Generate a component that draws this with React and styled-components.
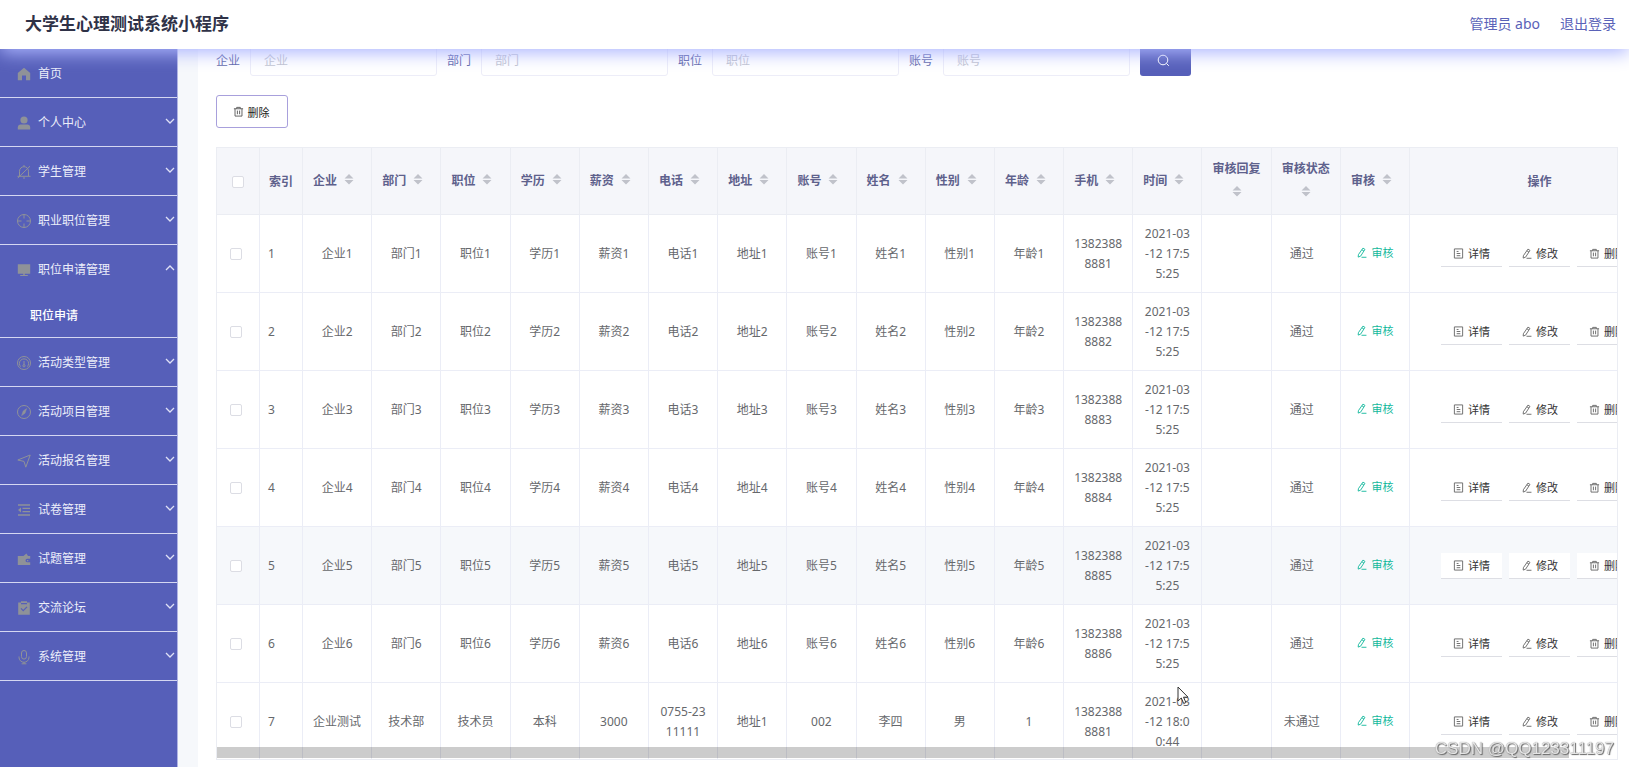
import React from "react";
import styled, { createGlobalStyle } from "styled-components";

const GlobalStyle = createGlobalStyle`
  *, *::before, *::after { box-sizing: border-box; }
  body {
    margin: 0;
    background: #fff;
    font-family: "Noto Sans", "Noto Sans CJK SC", sans-serif;
    font-size: 12px;
    color: #66686c;
  }
  button, input { font-family: inherit; }
  a { text-decoration: none; color: inherit; }
`;

const Page = styled.div`
  height: 100vh;
  display: flex;
  flex-direction: column;
  overflow: hidden;
`;

const Header = styled.header`
  position: relative;
  z-index: 2;
  flex: 0 0 49px;
  display: flex;
  align-items: center;
  justify-content: space-between;
  padding: 0 13px 2px 25px;
  background: #fff;
  box-shadow: 0 4px 18px #adb6ff;
`;

const Title = styled.h1`
  margin: 0;
  font-size: 17px;
  line-height: 24px;
  font-weight: 700;
  color: #2f3247;
`;

const Account = styled.div`
  display: flex;
  gap: 20px;
  font-size: 14px;
  line-height: 20px;
  color: #5a62b8;
`;

const Body = styled.div`
  flex: 1;
  min-height: 0;
  display: flex;
`;

const Sidebar = styled.nav`
  flex: 0 0 178px;
  background: #565fb9;
  border-right: 1px solid #b0b4e4;
`;

const MenuGroup = styled.div`
  border-bottom: 1px solid #d5d7f2;
`;

const MenuItem = styled.a`
  display: flex;
  align-items: center;
  height: 48px;
  padding: 2px 2px 0 16px;
  color: #eceefa;
  line-height: 18px;
`;

const MenuIcon = styled.svg`
  width: 16px;
  height: 16px;
  margin-right: 6px;
  color: #8f9298;
  fill: none;
  stroke: currentColor;
  stroke-width: 1;
`;

const MenuArrow = styled.svg`
  width: 10px;
  height: 10px;
  margin: 0 0 5px auto;
  fill: none;
  stroke: #dfe1f6;
  stroke-width: 1.3;
  transform: ${(p) => (p.$open ? "rotate(180deg)" : "none")};
`;

const SubItem = styled.a`
  display: flex;
  align-items: center;
  height: 44px;
  padding-left: 30px;
  color: #fff;
  font-weight: 500;
`;

const Main = styled.main`
  flex: 1;
  min-width: 0;
  padding-left: 20px;
  background: #f6f8fb;
  overflow: hidden;
`;

const Panel = styled.section`
  display: flow-root;
  height: 100%;
  padding: 0 11px 0 18px;
  background: #fff;
`;

const SearchForm = styled.form`
  display: flex;
  align-items: center;
  gap: 10px;
  margin-top: -5px;
`;

const Field = styled.label`
  display: flex;
  align-items: center;
  gap: 10px;
  color: #6066a8;
`;

const TextInput = styled.input`
  width: 187px;
  height: 32px;
  padding: 0 13px;
  border: 1px solid #ededf8;
  border-radius: 3px;
  background: #fff;
  font-size: 12px;
  color: #606266;
  &::placeholder { color: #c3c5cf; }
`;

const SearchButton = styled.button`
  display: flex;
  align-items: center;
  justify-content: center;
  width: 51px;
  height: 32px;
  padding: 0 5px 0 0;
  border: 0;
  border-radius: 3px;
  background: #565fb9;
  color: #fff;
`;

const Icon = styled.svg`
  flex: none;
  width: ${(p) => p.$size || 11}px;
  height: ${(p) => p.$size || 11}px;
  fill: none;
  stroke: currentColor;
  stroke-width: 1;
  opacity: ${(p) => (p.$soft ? 0.75 : 1)};
`;

const DeleteButton = styled.button`
  display: flex;
  align-items: center;
  justify-content: center;
  gap: 4px;
  width: 72px;
  height: 33px;
  margin: 19px 0;
  padding: 0 2px 0 0;
  border: 1px solid #a8a0dc;
  border-radius: 3px;
  background: #fff;
  font-size: 11px;
  color: #222;
`;

const TableBox = styled.div`
  position: relative;
  height: 613px;
  border: 1px solid #ebedf3;
  overflow: hidden;
`;

const DataTable = styled.table`
  width: calc(100% + 53px);
  table-layout: fixed;
  border-collapse: separate;
  border-spacing: 0;
`;

const IndexCol = styled.col`
  width: 43px;
`;

const ActionCol = styled.col`
  width: 260px;
`;

const HeadCell = styled.th`
  height: 67px;
  padding: ${(p) => (p.$sortable ? "0 8px 1px" : "2px 0 0")};
  border-right: 1px solid #ebedf3;
  border-bottom: 1px solid #ebedf3;
  background: #f5f6fa;
  color: #5e618c;
  font-weight: 700;
  line-height: 24px;
  text-align: center;
`;

const Caret = styled.svg`
  display: inline-block;
  width: 24px;
  height: 12px;
  margin-bottom: 4px;
  vertical-align: middle;
  fill: #c0c2ca;
`;

const Row = styled.tr`
  background: ${(p) => (p.$hovered ? "#f6f8fb" : "#fff")};
`;

const Cell = styled.td`
  height: 78px;
  padding: 0 ${(p) => (p.$status ? "18px" : "10px")} 0 10px;
  border-right: 1px solid #ebedf6;
  border-bottom: 1px solid #ebedf6;
  line-height: 20px;
  text-align: ${(p) => (p.$left ? "left" : "center")};
  word-break: break-all;
  ${(p) => p.$left && "padding-left: 8px;"}
  ${(p) => p.$check && "padding: 0 4px 0 0;"}
`;

const CheckBox = styled.input`
  appearance: none;
  display: block;
  width: 12px;
  height: 12px;
  margin: 0 auto;
  border: 1px solid #dcdde4;
  border-radius: 2px;
  background: #fff;
`;

const ReviewButton = styled.button`
  display: inline-flex;
  align-items: center;
  gap: 4px;
  padding: 0;
  border: 0;
  background: none;
  font-size: 11px;
  line-height: 20px;
  color: #13b89c;
`;

const Actions = styled.div`
  display: flex;
  justify-content: center;
  gap: 7px;
`;

const ActionButton = styled.button`
  flex: none;
  display: flex;
  align-items: center;
  justify-content: center;
  gap: 4px;
  width: 61px;
  height: 26px;
  padding: 0;
  border: 0;
  border-bottom: 1px solid #dddee4;
  background: #fff;
  font-size: 11px;
  color: #333;
`;

const ScrollThumb = styled.div`
  position: absolute;
  left: 0;
  bottom: 1px;
  width: calc(100% - 48px);
  height: 11px;
  background: rgba(0, 0, 0, 0.2);
`;

const Watermark = styled.div`
  position: fixed;
  right: 15px;
  bottom: 6px;
  z-index: 3;
  font-family: "Liberation Sans", sans-serif;
  font-size: 17px;
  line-height: 24px;
  color: #e4e4e4;
  text-shadow: 1px 1px 1px #666, 0 0 1px #888;
`;

const Pointer = styled.svg`
  position: fixed;
  left: 1177px;
  top: 686px;
  z-index: 4;
  width: 13px;
  height: 20px;
  fill: #fff;
  stroke: #333;
  stroke-width: 1;
`;

const icons = {
  home: <path fill="currentColor" stroke="none" d="M8 1.8 14.2 7v7.2H10V9.6H6v4.6H1.8V7z" />,
  user: (
    <g fill="currentColor" stroke="none">
      <circle cx="8" cy="5" r="3.6" />
      <path d="M1.8 14.4v-1.8c0-2 1.2-3 3-3h6.4c1.8 0 3 1 3 3v1.8z" />
    </g>
  ),
  bell: <path d="M3.5 12V7.2a4.5 4.5 0 0 1 9 0V12M1.5 12.3h13M8 1v1.6M8 13v2M1.8 14 14 2.2" />,
  aim: (
    <g>
      <circle cx="8" cy="8" r="6.5" />
      <path d="M8 1.5v4M8 10.5v4M1.5 8h4M10.5 8h4" />
    </g>
  ),
  monitor: <path fill="currentColor" stroke="none" d="M1.8 2.2h12.4v9.6H1.8zM7.2 11.8h1.6v1.2h3v1H4.2v-1h3z" />,
  meter: (
    <g>
      <circle cx="8" cy="8" r="6.5" />
      <path d="M4.6 11.6a4.6 4.6 0 1 1 6.8 0M8 6v4" />
      <circle cx="8" cy="10.8" r="1.1" />
    </g>
  ),
  compass: (
    <g>
      <circle cx="8" cy="8" r="6.5" />
      <path fill="currentColor" d="m10.6 4.6-1.6 4.6-3.4 2.4 1.6-4.6z" strokeWidth="0.5" />
    </g>
  ),
  send: <path d="M1.8 7 14.2 2 9.8 14.2 8 8.4z" />,
  list: (
    <g strokeWidth="1.3">
      <path d="M2 3h12M6.5 6.4H14M6.5 9.6H14M2 13h12" />
      <path fill="currentColor" stroke="none" d="M5 5.4v5.2L2 8z" />
    </g>
  ),
  wallet: <path fill="currentColor" stroke="none" d="M1.8 5h5.6l3-2.6L12 5h2.2v2.8h-3a1.7 1.7 0 0 0 0 3.4h3V14H1.8zM11 8.9h1.3v1.3H11z" />,
  clipboard: (
    <g>
      <path fill="currentColor" stroke="none" d="M2.2 2.4H5V1.2h6v1.2h2.8v12.4H2.2z" />
      <path stroke="#565fb9" strokeWidth="1.2" d="m5 8.4 2.2 2.2L11 6.8M5 3.6h6" />
    </g>
  ),
  mic: (
    <g>
      <rect x="5.5" y="1.5" width="5" height="8.6" rx="2.5" />
      <path d="M3 7.5v.8a5 5 0 0 0 10 0v-.8M8 13.2v1.6M5.6 14.8h4.8" />
    </g>
  ),
};

const menu = [
  { label: "首页", icon: "home", leaf: true },
  { label: "个人中心", icon: "user" },
  { label: "学生管理", icon: "bell" },
  { label: "职业职位管理", icon: "aim" },
  { label: "职位申请管理", icon: "monitor", children: ["职位申请"] },
  { label: "活动类型管理", icon: "meter" },
  { label: "活动项目管理", icon: "compass" },
  { label: "活动报名管理", icon: "send" },
  { label: "试卷管理", icon: "list" },
  { label: "试题管理", icon: "wallet" },
  { label: "交流论坛", icon: "clipboard" },
  { label: "系统管理", icon: "mic" },
];

const filters = ["企业", "部门", "职位", "账号"];

const columns = [
  "企业", "部门", "职位", "学历", "薪资", "电话", "地址", "账号",
  "姓名", "性别", "年龄", "手机", "时间", "审核回复", "审核状态", "审核",
];

const numbered = ["企业", "部门", "职位", "学历", "薪资", "电话", "地址", "账号", "姓名", "性别", "年龄"];

const rows = [1, 2, 3, 4, 5, 6].map((n) => ({
  values: [...numbered.map((name) => name + n), "1382388888" + n, "2021-03-12 17:55:25", ""],
  status: "通过",
}));
rows.push({
  values: ["企业测试", "技术部", "技术员", "本科", "3000", "0755-2311111", "地址1", "002", "李四", "男", "1", "13823888881", "2021-03-12 18:00:44", ""],
  status: "未通过",
});

const TrashIcon = () => (
  <Icon $soft viewBox="0 0 12 12" aria-hidden="true">
    <path d="M1 3h10M4 3V1.5h4V3M2.2 3v8h7.6V3M4.8 5v4M7.2 5v4" />
  </Icon>
);

const PenIcon = ({ soft }) => (
  <Icon $soft={soft} viewBox="0 0 12 12" aria-hidden="true">
    <path d="M7.6 1.2 9.8 2.6 5 10 2.4 11l.2-2.6zM6.4 3l2.2 1.4M6 11.2h5.4" />
  </Icon>
);

const DocIcon = () => (
  <Icon $soft viewBox="0 0 12 12" aria-hidden="true">
    <path d="M1.5 1h9v10h-9zM4 3.8h2M4 6h4M4 8.4h4" />
  </Icon>
);

export default function App() {
  return (
    <Page>
      <GlobalStyle />
      <Header>
        <Title>大学生心理测试系统小程序</Title>
        <Account>
          <span>管理员 abo</span>
          <a href="#logout">退出登录</a>
        </Account>
      </Header>
      <Body>
        <Sidebar>
          {menu.map((item) => (
            <MenuGroup key={item.label}>
              <MenuItem href="#menu">
                <MenuIcon viewBox="0 0 16 16" aria-hidden="true">{icons[item.icon]}</MenuIcon>
                {item.label}
                {!item.leaf && (
                  <MenuArrow viewBox="0 0 10 10" $open={!!item.children} aria-hidden="true">
                    <path d="m1 3 4 4 4-4" />
                  </MenuArrow>
                )}
              </MenuItem>
              {item.children?.map((child) => (
                <SubItem key={child} href="#submenu">{child}</SubItem>
              ))}
            </MenuGroup>
          ))}
        </Sidebar>
        <Main>
          <Panel>
            <SearchForm>
              {filters.map((name) => (
                <Field key={name}>
                  {name}
                  <TextInput type="text" placeholder={name} />
                </Field>
              ))}
              <SearchButton type="button" aria-label="查询">
                <Icon $size={13} viewBox="0 0 13 13" aria-hidden="true">
                  <circle cx="6" cy="6" r="4.8" />
                  <path d="m9.4 9.4 2.4 2.4" />
                </Icon>
              </SearchButton>
            </SearchForm>
            <DeleteButton type="button"><TrashIcon />删除</DeleteButton>
            <TableBox>
              <DataTable>
                <colgroup>
                  <IndexCol />
                  <IndexCol />
                  {columns.map((name) => <col key={name} />)}
                  <ActionCol />
                </colgroup>
                <thead>
                  <tr>
                    <HeadCell><CheckBox type="checkbox" aria-label="全选" /></HeadCell>
                    <HeadCell>索引</HeadCell>
                    {columns.map((name) => (
                      <HeadCell key={name} $sortable>
                        {name}
                        <Caret viewBox="0 0 24 12" aria-hidden="true">
                          <path d="M12 1l4.5 4.4h-9zM12 11.4 7.5 7h9z" />
                        </Caret>
                      </HeadCell>
                    ))}
                    <HeadCell>操作</HeadCell>
                  </tr>
                </thead>
                <tbody>
                  {rows.map((row, i) => (
                    <Row key={i} $hovered={i === 4}>
                      <Cell $check><CheckBox type="checkbox" aria-label={`选择 ${i + 1}`} /></Cell>
                      <Cell $left>{i + 1}</Cell>
                      {row.values.map((value, j) => <Cell key={j}>{value}</Cell>)}
                      <Cell $status>{row.status}</Cell>
                      <Cell><ReviewButton type="button"><PenIcon />审核</ReviewButton></Cell>
                      <Cell>
                        <Actions>
                          <ActionButton type="button"><DocIcon />详情</ActionButton>
                          <ActionButton type="button"><PenIcon soft />修改</ActionButton>
                          <ActionButton type="button"><TrashIcon />删除</ActionButton>
                        </Actions>
                      </Cell>
                    </Row>
                  ))}
                </tbody>
              </DataTable>
              <ScrollThumb />
            </TableBox>
          </Panel>
        </Main>
      </Body>
      <Watermark>CSDN @QQ123311197</Watermark>
      <Pointer viewBox="0 0 13 20" aria-hidden="true">
        <path d="M1 1v14l3.3-3 2.4 5.5 2.2-1-2.4-5.3h4.5z" />
      </Pointer>
    </Page>
  );
}
